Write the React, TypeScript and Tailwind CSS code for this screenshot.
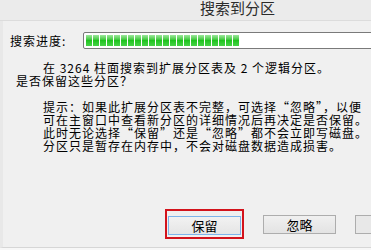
import React from 'react';

const font = { fontFamily: '"Noto Sans CJK SC", "Liberation Sans", sans-serif' };

function ProgressBar({ chunks }: { chunks: number }) {
  return (
    <div className="h-[17px] w-[320px] shrink-0 rounded-[2px] border border-[#7a7a7a] bg-white p-[2px] flex gap-px">
      {Array.from({ length: chunks }).map((_, i) => (
        <div
          key={i}
          className="h-full w-[6px] bg-gradient-to-b from-[#9be89b] via-[#1ec31e] to-[#45d445]"
        />
      ))}
    </div>
  );
}

export default function App() {
  return (
    <div
      className="w-[371px] h-[250px] overflow-hidden bg-[#f0f0f0] text-black flex flex-col"
      style={font}
    >
      {/* title bar */}
      <div className="h-[21px] shrink-0 border-b border-[#dcdcdc] bg-[#ebebeb] relative overflow-hidden">
        <div className="absolute left-[200px] top-0 text-[15px] leading-[15px] text-[#2b2b2b] whitespace-nowrap">
          搜索到分区
        </div>
      </div>

      <div className="flex-1 border-l-[3px] border-[#e8e8e8] border-b border-b-[#d6d6d6] flex flex-col">
        {/* progress row */}
        <div className="mt-[11px] flex items-center pl-[7px]">
          <span className="w-[73px] shrink-0 text-[12px] tracking-[1px] leading-[17px]">搜索进度:</span>
          <ProgressBar chunks={22} />
        </div>

        {/* message */}
        <div className="mt-[12px] text-[12px] tracking-[1px] leading-[13px] whitespace-nowrap">
          <div className="pl-[40px]">在 3264 柱面搜索到扩展分区表及 2 个逻辑分区。</div>
          <div className="pl-[13px]">是否保留这些分区？</div>
          <div className="h-[13px]" />
          <div className="pl-[40px]">提示：如果此扩展分区表不完整，可选择“忽略”，以便</div>
          <div className="pl-[40px]">可在主窗口中查看新分区的详细情况后再决定是否保留。</div>
          <div className="pl-[40px]">此时无论选择“保留”还是“忽略”都不会立即写磁盘。</div>
          <div className="pl-[40px]">分区只是暂存在内存中，不会对磁盘数据造成损害。</div>
        </div>

        {/* buttons */}
        <div className="mt-auto mb-[8px] flex items-center pl-[162px] gap-[19px] whitespace-nowrap">
          <div className="shrink-0 border-2 border-[#d3131c] p-px">
            <button className="w-[73px] h-[19px] border border-[#7eb4ea] bg-gradient-to-b from-[#f2f2f2] to-[#e5e5e5] text-[13px] leading-[17px]">
              保留
            </button>
          </div>
          <button className="shrink-0 w-[73px] h-[19px] border border-[#adadad] bg-gradient-to-b from-[#f0f0f0] to-[#e3e3e3] text-[13px] leading-[17px]">
            忽略
          </button>
          <button className="w-[73px] h-[19px] shrink-0 border border-[#adadad] bg-[#e8e8e8]" />
        </div>
      </div>
      <div className="h-[2px] shrink-0 bg-[#f7f7f7]" />
    </div>
  );
}
